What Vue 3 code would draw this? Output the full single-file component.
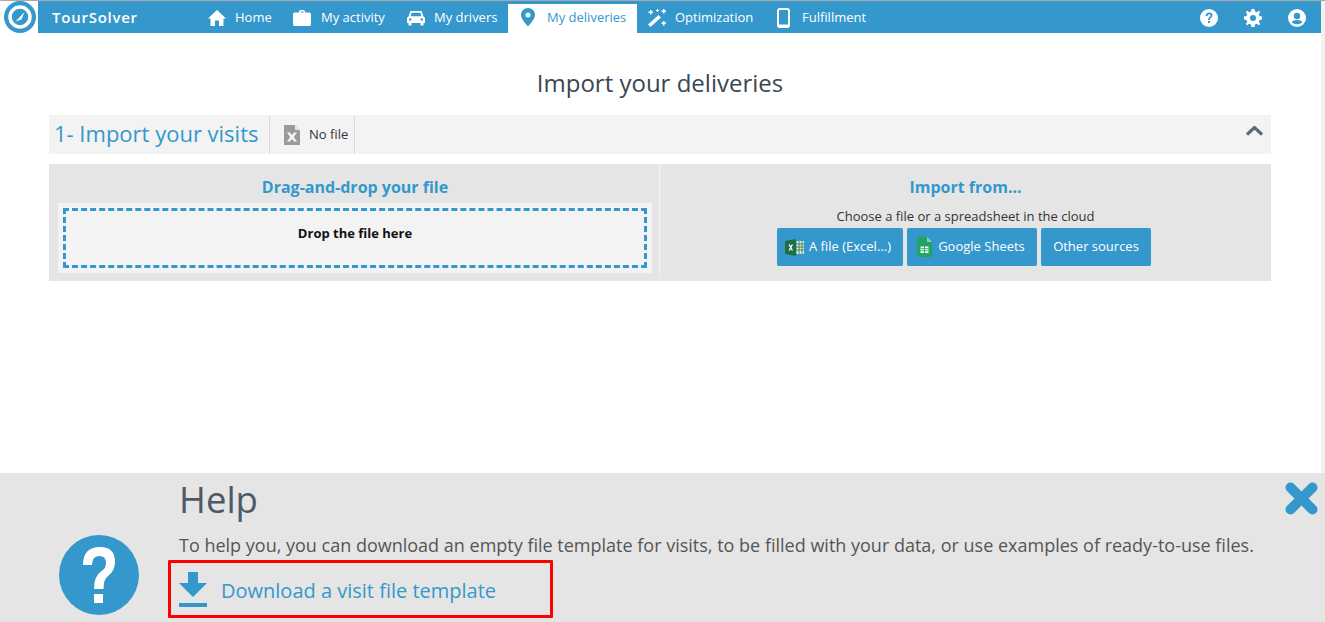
<script setup>
const nav = [
  { label: 'Home', w: 'home' },
  { label: 'My activity', w: 'bag' },
  { label: 'My drivers', w: 'car' },
  { label: 'My deliveries', w: 'pin', active: true },
  { label: 'Optimization', w: 'wand' },
  { label: 'Fulfillment', w: 'phone' }
]
</script>

<template>
  <div class="page">
    <header class="topbar">
      <div class="logo">
        <svg width="32" height="32" viewBox="0 0 32 32">
          <circle cx="16" cy="16" r="16" fill="#3498cd" />
          <circle cx="16" cy="16" r="10" fill="none" stroke="#fff" stroke-width="3.500" />
          <path d="M11.500 20.500 L20.500 11 L17.500 18.500 Z" fill="#fff" />
        </svg>
      </div>
      <div class="bar">
        <span class="brand">TourSolver</span>
        <nav class="nav">
          <a v-for="n in nav" :key="n.label" class="tab" :class="[n.w, { active: n.active }]">
            <svg v-if="n.w === 'home'" width="20" height="18" viewBox="0 0 20 18"><path d="M10 1 L19 9.500 H16.500 V17 H12 V11.500 H8 V17 H3.500 V9.500 H1 Z" fill="#fff" /></svg>
            <svg v-else-if="n.w === 'bag'" width="18" height="18" viewBox="0 0 18 18"><path d="M6 3.500 V2.500 Q6 1 7.500 1 H10.500 Q12 1 12 2.500 V3.500 H16.500 Q18 3.500 18 5 V15.500 Q18 17 16.500 17 H1.500 Q0 17 0 15.500 V5 Q0 3.500 1.500 3.500 Z M7.500 3.500 H10.500 V2.400 H7.500 Z" fill="#fff" fill-rule="evenodd" /></svg>
            <svg v-else-if="n.w === 'car'" width="18" height="16" viewBox="0 0 18 16"><path d="M3.500 1 H14.500 L16.500 6.500 Q18 7 18 8.500 V13 H16.500 V15.500 H13.500 V13 H4.500 V15.500 H1.500 V13 H0 V8.500 Q0 7 1.500 6.500 Z M4.700 2.800 L3.500 6.300 H14.500 L13.300 2.800 Z M3.200 8.200 A1.300 1.300 0 1 0 3.200 10.800 A1.300 1.300 0 1 0 3.200 8.200 Z M14.800 8.200 A1.300 1.300 0 1 0 14.800 10.800 A1.300 1.300 0 1 0 14.800 8.200 Z" fill="#fff" fill-rule="evenodd" /></svg>
            <svg v-else-if="n.w === 'pin'" width="14" height="19" viewBox="0 0 14 19"><path d="M7 0 C10.900 0 14 3 14 6.800 C14 11 9.500 15.500 7 18.500 C4.500 15.500 0 11 0 6.800 C0 3 3.100 0 7 0 Z M7 4.500 A2.500 2.500 0 1 0 7 9.500 A2.500 2.500 0 1 0 7 4.500 Z" fill="#3498cd" fill-rule="evenodd" /></svg>
            <svg v-else-if="n.w === 'wand'" width="20" height="20" viewBox="0 0 20 20"><path d="M1 16.500 L11.500 7 L14 9.500 L3.500 19 Z" fill="#fff" /><path d="M3 2 h1.500 v1.500 h1.500 v1.500 h-1.500 v1.500 h-1.500 v-1.500 h-1.500 v-1.500 h1.500 Z M16 1 h1.500 v1.500 h1.500 v1.500 h-1.500 v1.500 h-1.500 v-1.500 h-1.500 v-1.500 h1.500 Z M16 13 h1.500 v1.500 h1.500 v1.500 h-1.500 v1.500 h-1.500 v-1.500 h-1.500 v-1.500 h1.500 Z M10 1 h1 v1 h1 v1 h-1 v1 h-1 v-1 h-1 v-1 h1 Z" fill="#fff" /></svg>
            <svg v-else width="13" height="20" viewBox="0 0 13 20"><rect x="1" y="1" width="11" height="18" rx="2" fill="none" stroke="#fff" stroke-width="2" /><rect x="1" y="16.500" width="11" height="2" fill="#fff" /></svg>
            <span>{{ n.label }}</span>
          </a>
        </nav>
        <div class="tools">
          <svg width="18" height="18" viewBox="0 0 18 18"><circle cx="9" cy="9" r="9" fill="#fff" /><path d="M5.700 7 Q5.700 3.500 9.200 3.500 Q12.500 3.500 12.500 6.300 Q12.500 8 10.800 9 Q10 9.500 10 11 H8 Q8 8.800 9.500 8 Q10.500 7.300 10.500 6.400 Q10.500 5.300 9.200 5.300 Q7.700 5.300 7.600 7 Z M8 12 H10 V14 H8 Z" fill="#3498cd" /></svg>
          <svg width="18" height="18" viewBox="0 0 18 18"><path d="M7.500 0 H10.500 L11 2.500 L12.700 3.200 L14.900 1.800 L16.200 3.100 L14.800 5.300 L15.500 7 L18 7.500 V10.500 L15.500 11 L14.800 12.700 L16.200 14.900 L14.900 16.200 L12.700 14.800 L11 15.500 L10.500 18 H7.500 L7 15.500 L5.300 14.800 L3.100 16.200 L1.800 14.900 L3.200 12.700 L2.500 11 L0 10.500 V7.500 L2.500 7 L3.200 5.300 L1.800 3.100 L3.100 1.800 L5.300 3.200 L7 2.500 Z M9 6 A3 3 0 1 0 9 12 A3 3 0 1 0 9 6 Z" fill="#fff" fill-rule="evenodd" /></svg>
          <svg width="18" height="18" viewBox="0 0 18 18"><circle cx="9" cy="9" r="9" fill="#fff" /><circle cx="9" cy="7" r="3.200" fill="#3498cd" /><path d="M3.700 13.200 Q5 10.900 9 10.900 Q13 10.900 14.300 13.200 Q12.500 15.300 9 15.300 Q5.500 15.300 3.700 13.200 Z" fill="#3498cd" /></svg>
        </div>
      </div>
    </header>

    <main class="main">
      <h1 class="title">Import your deliveries</h1>

      <section class="step">
        <h2 class="step-name">1- Import your visits</h2>
        <div class="file-state">
          <svg width="16" height="20" viewBox="0 0 16 20"><path d="M0 0 H10.500 L16 5.500 V20 H0 Z" fill="#9a9a9a" /><path d="M11 0.500 L15.500 5 H11 Z" fill="#e8e8e8" /><path d="M3 7.500 H6 L8 10 L10 7.500 H13 L9.800 12 L13 16.500 H10 L8 14 L6 16.500 H3 L6.200 12 Z" fill="#f3f3f3" /></svg>
          <span>No file</span>
        </div>
        <svg class="chevron" width="17" height="11" viewBox="0 0 17 11"><path d="M1 8.500 L8.500 1.500 L16 8.500" fill="none" stroke="#5b6b78" stroke-width="3.200" /></svg>
      </section>

      <section class="import">
        <div class="col left">
          <h3>Drag-and-drop your file</h3>
          <div class="drop-wrap">
            <div class="drop"><b>Drop the file here</b></div>
          </div>
        </div>
        <div class="col right">
          <h3>Import from...</h3>
          <p>Choose a file or a spreadsheet in the cloud</p>
          <div class="buttons">
            <button class="btn excel">
              <svg width="19" height="17" viewBox="0 0 19 17"><rect x="9" y="2" width="10" height="13" fill="#dfeee5" /><path d="M11 2 V15 M14 2 V15 M17 2 V15 M9 5 H19 M9 8 H19 M9 11 H19" stroke="#1e7145" stroke-width=".8" /><path d="M0 2 L11 0 V17 L0 15 Z" fill="#1e7145" /><path d="M3.500 5.500 H5 L5.800 7.300 L6.600 5.500 H8 L6.600 8.500 L8 11.500 H6.600 L5.800 9.700 L5 11.500 H3.500 L5 8.500 Z" fill="#fff" /></svg>
              <span>A file (Excel...)</span>
            </button>
            <button class="btn sheets">
              <svg width="15" height="20" viewBox="0 0 15 20"><path d="M1 0 H10 L15 5 V18.500 Q15 20 13.500 20 H1.500 Q0 20 0 18.500 V1 Q0 0 1 0 Z" fill="#1fa463" /><path d="M10 0 L15 5 H10 Z" fill="#8ed1b1" /><path d="M3.500 9.500 H11.500 V16 H3.500 Z" fill="#fff" /><path d="M3.500 11.700 H11.500 M3.500 13.800 H11.500 M7.500 9.500 V16" stroke="#1fa463" stroke-width=".9" /></svg>
              <span>Google Sheets</span>
            </button>
            <button class="btn other"><span>Other sources</span></button>
          </div>
        </div>
      </section>
    </main>

    <aside class="help">
      <svg class="help-icon" width="80" height="80" viewBox="0 0 80 80"><circle cx="40" cy="40" r="40" fill="#3498cd" /><path d="M24 30 Q24 12 41 12 Q56 12 56 27 Q56 36 49 41 Q44.500 44 44.500 54 H35 Q35 41 42 36.500 Q47 33.500 47 28 Q47 21 40.500 21 Q33 21 33 30 Z M35 59 H44 V68 H35 Z" fill="#fff" /></svg>
      <div class="help-body">
        <h2>Help</h2>
        <p>To help you, you can download an empty file template for visits, to be filled with your data, or use examples of ready-to-use files.</p>
        <a class="download">
          <svg width="28" height="35" viewBox="0 0 28 35"><path d="M9 0 H19 V11 H28 L14 25 L0 11 H9 Z" fill="#3498cd" /><rect y="31" width="28" height="4" fill="#3498cd" /></svg>
          <span>Download a visit file template</span>
        </a>
      </div>
      <svg class="close" width="33" height="33" viewBox="0 0 33 33"><path d="M5.500 5.500 L27.500 27.500 M27.500 5.500 L5.500 27.500" fill="none" stroke="#3498cd" stroke-width="10" stroke-linecap="round" /></svg>
    </aside>
  </div>
</template>

<style>
html, body { margin: 0; height: 622px; overflow: hidden; background: #fff; }
</style>

<style scoped>
.page {
  height: 622px;
  display: flex;
  flex-direction: column;
  font-family: "Open Sans", sans-serif;
  border-top: 1px solid #a9a9a9;
  box-sizing: border-box;
  position: relative;
  background: linear-gradient(to left, #f1f1f1 4px, #fff 4px);
}
.topbar {
  display: flex;
  height: 32px;
  flex: none;
  padding-left: 4px;
  padding-right: 4px;
}
.logo { width: 34px; flex: none; height: 32px; background: #fff; }
.logo svg { display: block; }
.bar {
  flex: 1;
  display: flex;
  align-items: stretch;
  background: #3498cd;
  color: #fff;
  height: 32px;
}
.brand {
  font-size: 15px;
  font-weight: 600;
  letter-spacing: .75px;
  margin-left: 14px;
  width: 155px;
  flex: none;
  line-height: 32px;
}
.nav { display: flex; }
.tab {
  display: flex;
  align-items: center;
  font-size: 13px;
  height: 29px;
  margin-top: 3px;
  padding-bottom: 2px;
  box-sizing: border-box;
}
.tab span { line-height: 24px; padding-bottom: 2px; }
.tab.home { width: 86px; gap: 8px; }
.tab.bag { width: 114px; gap: 10px; }
.tab.car { width: 101px; gap: 9px; }
.tab.pin { width: 129px; gap: 12px; padding-left: 13px; }
.tab.wand { width: 140px; gap: 8px; padding-left: 10px; }
.tab.phone { gap: 12px; }
.active { background: #fff; color: #3498cd; }
.tools {
  margin-left: auto;
  margin-right: 15px;
  display: flex;
  align-items: center;
  gap: 26px;
  width: 106px;
  margin-top: 1px;
}
.main { padding: 0 54px 0 49px; flex: 1; }
.title {
  margin: 36px 0 0;
  height: 46px;
  font-size: 24px;
  line-height: 28px;
  font-weight: 400;
  color: #3c4650;
  text-align: center;
}
.step {
  display: flex;
  align-items: center;
  height: 39px;
  background: #f3f3f3;
}
.step-name {
  margin: 0;
  font-size: 22px;
  font-weight: 400;
  color: #3498cd;
  width: 215px;
  padding-left: 5px;
  height: 100%;
  line-height: 37px;
  border-right: 1px solid #d8d8d8;
  white-space: nowrap;
  box-sizing: content-box;
}
.file-state {
  display: flex;
  align-items: center;
  gap: 9px;
  height: 100%;
  width: 85px;
  padding-left: 14px;
  box-sizing: border-box;
  border-right: 1px solid #d8d8d8;
  font-size: 13px;
  color: #333;
}
.file-state span { padding-bottom: 2px; }
.chevron { margin-left: auto; margin-right: 8px; margin-top: -7px; }
.import {
  display: flex;
  margin-top: 10px;
  height: 117px;
  background: #e5e5e5;
}
.col { text-align: center; box-sizing: border-box; }
.col h3 {
  margin: 0;
  font-size: 16px;
  font-weight: 700;
  color: #3498cd;
  line-height: 20px;
  padding-top: 13px;
}
.left { width: 611px; padding: 0 7px 0 9px; height: 110px; border-right: 1px solid #f5f5f5; }
.drop-wrap { margin-top: 6px; background: #f3f3f3; padding: 5px; height: 70px; box-sizing: border-box; }
.drop {
  height: 60px;
  border: 3px dashed #3498cd;
  box-sizing: border-box;
  font-size: 13px;
  color: #111;
  padding-top: 14px;
  line-height: 17px;
}
.right { flex: 1; }
.right p { margin: 11px 0 0; font-size: 13px; line-height: 17px; color: #333; }
.buttons { display: flex; justify-content: center; gap: 4px; margin-top: 3px; padding-right: 3px; }
.btn {
  height: 38px;
  border: 0;
  border-radius: 2px;
  background: #3498cd;
  color: #fff;
  font: 13px "Open Sans", sans-serif;
  display: flex;
  align-items: center;
  justify-content: center;
  padding: 0;
  white-space: nowrap;
}
.btn span { padding-bottom: 2px; }
.excel { width: 126px; gap: 5px; padding-right: 4px; }
.sheets { width: 130px; gap: 6px; padding-right: 2px; }
.other { width: 110px; }
.help {
  height: 149px;
  flex: none;
  background: #e5e5e5;
  display: flex;
  position: relative;
}
.help-icon { margin: 62px 0 0 59px; flex: none; }
.help-body { margin-left: 40px; }
.help h2 {
  margin: 3px 0 0;
  font-size: 36.5px;
  line-height: 46px;
  font-weight: 400;
  color: #4d5a66;
}
.help p {
  margin: 11px 0 0;
  font-size: 18px;
  line-height: 24px;
  color: #555;
  white-space: nowrap;
}
.download {
  display: inline-flex;
  align-items: center;
  gap: 14px;
  margin: 3px 0 0 -11px;
  width: 385px;
  height: 58px;
  box-sizing: border-box;
  border: 3px solid #f00;
  padding-left: 8px;
  font-size: 20px;
  color: #3498cd;
  border-radius: 1px;
}
.download span { padding-top: 2px; }
.close { position: absolute; right: 7px; top: 9px; }
</style>
